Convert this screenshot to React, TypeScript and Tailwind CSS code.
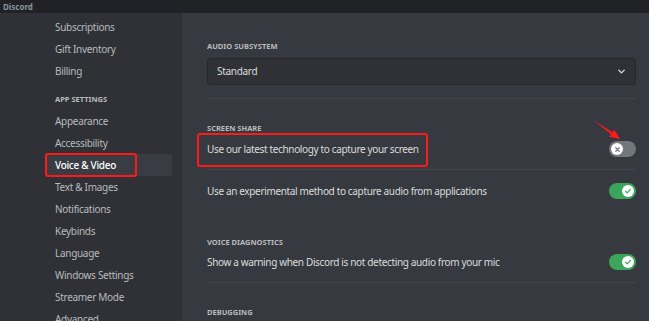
const sideTop = ["Subscriptions", "Gift Inventory", "Billing"];
const sideApp = [
  "Appearance",
  "Accessibility",
  "Voice & Video",
  "Text & Images",
  "Notifications",
  "Keybinds",
  "Language",
  "Windows Settings",
  "Streamer Mode",
  "Advanced",
];

function SideItem({ label, active = false }: { label: string; active?: boolean }) {
  return (
    <div
      className={`ml-[46px] flex h-[22px] w-[126px] shrink-0 items-center rounded-[3px] px-[9px] text-[10px] tracking-[-0.03em] ${
        active ? "bg-[#393c43] font-medium text-white" : "text-[#b9bbbe]"
      }`}
    >
      {label}
    </div>
  );
}

function Label({ children }: { children: string }) {
  return (
    <div className="flex h-[10px] items-center text-[7.5px] font-bold uppercase text-[#b9bbbe]">
      {children}
    </div>
  );
}

function Toggle({ on }: { on: boolean }) {
  return (
    <div
      className={`flex h-[16px] w-[27px] shrink-0 items-center rounded-full px-[2px] ${
        on ? "justify-end bg-[#3ba55c]" : "justify-start bg-[#72767d]"
      }`}
    >
      <div className="flex h-[12px] w-[12px] items-center justify-center rounded-full bg-white">
        {on ? (
          <svg width="8" height="8" viewBox="0 0 20 20">
            <path d="M4 10.5l4 4 8-8.5" fill="none" stroke="#3ba55c" strokeWidth="3" strokeLinecap="round" strokeLinejoin="round" />
          </svg>
        ) : (
          <svg width="7" height="7" viewBox="0 0 20 20">
            <path d="M5 5l10 10M15 5L5 15" fill="none" stroke="#72767d" strokeWidth="3.4" strokeLinecap="round" />
          </svg>
        )}
      </div>
    </div>
  );
}

function Row({ text, on, className = "" }: { text: string; on: boolean; className?: string }) {
  return (
    <div className={`flex h-[20px] items-center justify-between ${className}`}>
      <span className="text-[10px] tracking-[-0.035em] text-[#dcddde]">{text}</span>
      <Toggle on={on} />
    </div>
  );
}

export default function App() {
  return (
    <div
      className="relative flex h-[321px] w-[649px] flex-col overflow-hidden bg-[#36393f]"
      style={{ fontFamily: '"Noto Sans", "Open Sans", sans-serif' }}
    >
      <div className="flex h-[13px] shrink-0 items-center bg-[#202225] pl-[3px] text-[8px] font-bold text-[#8e9297]">
        Discord
      </div>
      <div className="flex min-h-0 flex-1">
        <div className="flex w-[182px] shrink-0 flex-col bg-[#2f3136] pt-[3px]">
          {sideTop.map((s) => (
            <SideItem key={s} label={s} />
          ))}
          <div className="ml-[50px] mt-[4px] h-px w-[122px] bg-[#393c42]" />
          <div className="ml-[55px] mt-[9px]">
            <Label>App Settings</Label>
          </div>
          <div className="mt-[5px] flex flex-col">
            {sideApp.map((s) => (
              <SideItem key={s} label={s} active={s === "Voice & Video"} />
            ))}
          </div>
        </div>
        <div className="flex w-[454px] flex-col pl-[25px] pt-[29px]">
          <Label>Audio Subsystem</Label>
          <div className="mt-[6px] flex h-[27px] items-center justify-between rounded-[3px] border border-[#26282c] bg-[#2f3136] pl-[9px] pr-[8px]">
            <span className="text-[10px] tracking-[-0.03em] text-[#dcddde]">Standard</span>
            <svg width="11" height="11" viewBox="0 0 24 24">
              <path d="M6 9l6 6 6-6" fill="none" stroke="#dcddde" strokeWidth="3" strokeLinecap="round" strokeLinejoin="round" />
            </svg>
          </div>
          <div className="mt-[13px] h-px bg-[#42454a]" />
          <div className="mt-[25px]">
            <Label>Screen Share</Label>
          </div>
          <Row className="mt-[5px]" text="Use our latest technology to capture your screen" on={false} />
          <div className="mt-[10px] h-px bg-[#42454a]" />
          <Row className="mt-[11px]" text="Use an experimental method to capture audio from applications" on={true} />
          <div className="mt-[37px]">
            <Label>Voice Diagnostics</Label>
          </div>
          <Row className="mt-[4px]" text="Show a warning when Discord is not detecting audio from your mic" on={true} />
          <div className="mt-[10px] h-px bg-[#42454a]" />
          <div className="mt-[25px]">
            <Label>Debugging</Label>
          </div>
        </div>
      </div>

      {/* annotation overlays */}
      <div className="absolute left-[45px] top-[153px] h-[24px] w-[92px] rounded-[3px] border-2 border-[#ff1a1a]" />
      <div className="absolute left-[197px] top-[133px] h-[34px] w-[231px] rounded-[3px] border-2 border-[#ff1a1a]" />
      <svg className="absolute left-[590px] top-[116px]" width="34" height="26" viewBox="0 0 34 26">
        <path d="M3 4 L22.5 16.3 L24.3 13.6 L30 23 L19.2 20.8 L21 18.2 Z" fill="#ff1a1a" />
      </svg>
    </div>
  );
}
